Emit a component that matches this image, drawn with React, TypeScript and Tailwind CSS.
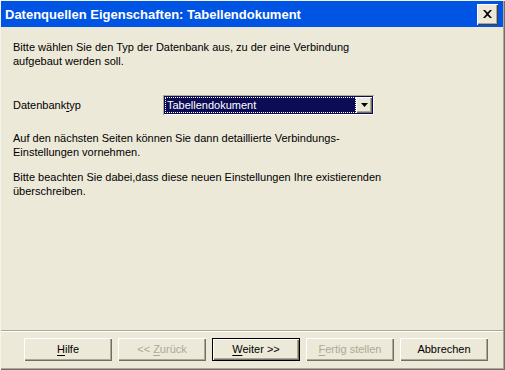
import React from "react";

function U({ children }: { children: React.ReactNode }) {
  return <span className="underline underline-offset-[2px]">{children}</span>;
}

function Btn({
  children,
  disabled,
  def,
}: {
  children: React.ReactNode;
  disabled?: boolean;
  def?: boolean;
}) {
  return (
    <div
      className={
        "w-[88px] h-[23px] flex items-center justify-center bg-[#ECE9D8] " +
        (def
          ? "border border-[#000] shadow-[inset_1px_1px_0_#fff,inset_-1px_-1px_0_#716F64,inset_-2px_-2px_0_#ACA899]"
          : "shadow-[inset_1px_1px_0_#fff,inset_-1px_-1px_0_#716F64,inset_-2px_-2px_0_#ACA899]") +
        (disabled ? " text-[#ACA899]" : " text-black")
      }
    >
      <span className="leading-none">{children}</span>
    </div>
  );
}

export default function App() {
  return (
    <div className="w-[505px] h-[370px] bg-[#ECE9D8] flex flex-col font-['Liberation_Sans',Arial,sans-serif] text-[11px] text-black shadow-[inset_1px_1px_0_#F4F3EE,inset_-1px_-1px_0_#716F64,inset_-2px_-2px_0_#ACA899] pt-[1px] pl-[1px] pr-[2px] pb-[2px]">
      {/* Title bar */}
      <div className="h-[26px] bg-[#0054E3] flex items-center justify-between pl-[4px] pr-[5px]">
        <span className="text-white font-bold text-[13px] leading-none">
          Datenquellen Eigenschaften: Tabellendokument
        </span>
        <div className="w-[21px] h-[21px] bg-[#ECE9D8] flex items-center justify-center shadow-[inset_1px_1px_0_#fff,inset_-1px_-1px_0_#404040,inset_-2px_-2px_0_#ACA899]">
          <svg width="9" height="8" viewBox="0 0 9 8">
            <path
              d="M0 0h2l2.5 2.5L7 0h2L5.5 4 9 8H7L4.5 5.5 2 8H0l3.5-4z"
              fill="#000"
            />
          </svg>
        </div>
      </div>

      {/* Body */}
      <div className="flex-1 flex flex-col pl-[12px] leading-[14px]">
        <p className="mt-[13px]">
          Bitte wählen Sie den Typ der Datenbank aus, zu der eine Verbindung
          <br />
          aufgebaut werden soll.
        </p>

        <div className="mt-[27px] flex items-center h-[20px]">
          <span className="w-[150px]">
            Datenbank<U>t</U>yp
          </span>
          <div className="w-[211px] h-[20px] flex shadow-[inset_1px_1px_0_#ACA899,inset_-1px_-1px_0_#fff] p-[2px] bg-[#0c0c55]">
            <div className="flex-1 border border-dotted border-white flex items-center pl-[1px] text-white leading-none">
              Tabellendokument
            </div>
            <div className="w-[16px] bg-[#ECE9D8] flex items-center justify-center shadow-[inset_1px_1px_0_#fff,inset_-1px_-1px_0_#716F64,inset_-2px_-2px_0_#ACA899]">
              <svg width="7" height="4" viewBox="0 0 7 4">
                <path d="M0 0h7L3.5 4z" fill="#000" />
              </svg>
            </div>
          </div>
        </div>

        <p className="mt-[16px]">
          Auf den nächsten Seiten können Sie dann detaillierte Verbindungs-
          <br />
          Einstellungen vornehmen.
        </p>

        <p className="mt-[11px]">
          Bitte beachten Sie dabei,dass diese neuen Einstellungen Ihre existierenden
          <br />
          überschreiben.
        </p>
      </div>

      {/* Footer */}
      <div className="flex flex-col">
        <div className="h-[1px] bg-[#ACA899]" />
        <div className="h-[1px] bg-white" />
        <div className="flex gap-[6px] pl-[23px] pt-[6px] pb-[7px]">
          <Btn>
            <U>H</U>ilfe
          </Btn>
          <Btn disabled>
            &lt;&lt; <U>Z</U>urück
          </Btn>
          <Btn def>
            <U>W</U>eiter &gt;&gt;
          </Btn>
          <Btn disabled>
            <U>F</U>ertig stellen
          </Btn>
          <Btn>Abbrechen</Btn>
        </div>
      </div>
    </div>
  );
}
